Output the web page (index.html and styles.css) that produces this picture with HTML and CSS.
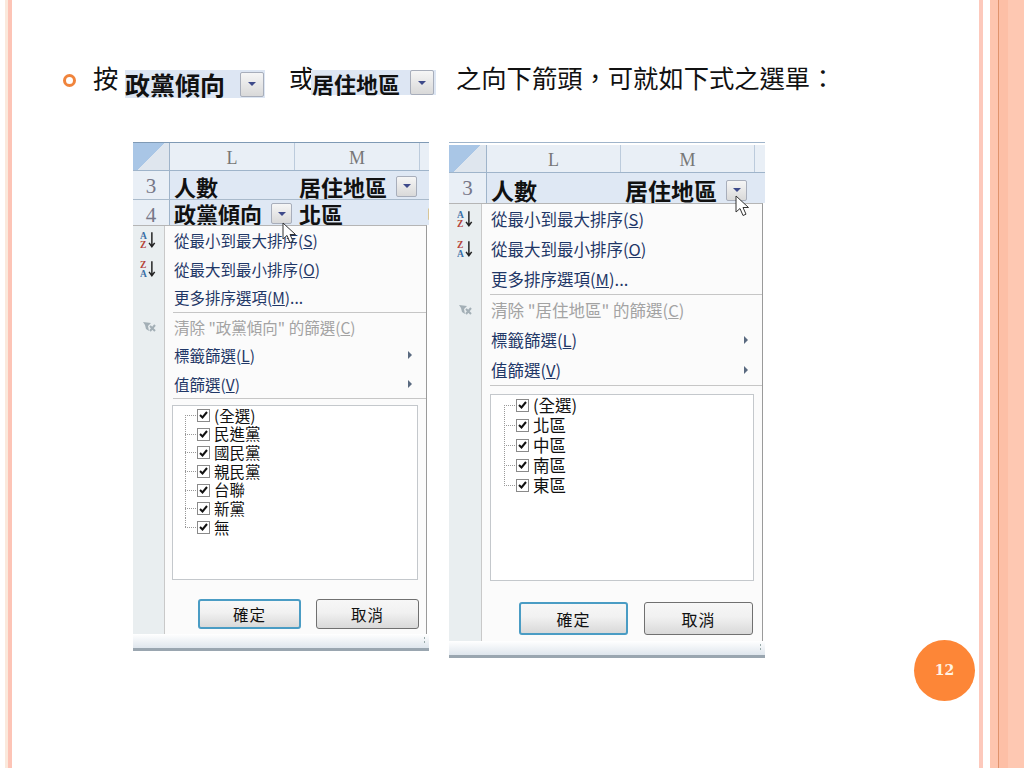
FILE: index.html
```html
<!DOCTYPE html>
<html>
    <head>
        <title>樞紐分析表篩選</title>
        <link rel="stylesheet" href="styles.css">
    </head>
    <body>
        <div class="rail-left"></div>
        <div class="slide">
            <div class="lead">
                <span class="ring"></span>
                <span class="word">按</span>
                <span class="chip chip-a">政黨傾向<span class="drop"></span></span>
                <span class="word word-or">或</span>
                <span class="chip chip-b">居住地區<span class="drop"></span></span>
                <span class="word word-end">之向下箭頭&#xFF0C;可就如下式之選單&#xFF1A;</span>
            </div>

            <div class="shots">
                <div class="shot shot-a">
                    <div class="head">
                        <span class="corner"></span>
                        <span class="col col-l">L</span>
                        <span class="col col-m">M</span>
                        <span class="col col-n"></span>
                    </div>
                    <div class="row row-3">
                        <span class="num">3</span>
                        <span class="cell cell-l">人數</span>
                        <span class="cell cell-m">居住地區<span class="drop"></span></span>
                    </div>
                    <div class="row row-4">
                        <span class="num">4</span>
                        <span class="cell cell-l">政黨傾向<span class="drop"></span></span>
                        <span class="cell cell-m">北區</span>
                        <span class="cell cell-n">中</span>
                    </div>
                    <div class="menu">
                        <div class="item">
                            <span class="icon"><svg width="17" height="18" viewBox="0 0 15 16"><text x="0" y="7" class="az-top">A</text><text x="0" y="15" class="az-bot">Z</text><path d="M10.5 1v12M8 10.5l2.5 3.5 2.5-3.5" fill="none" stroke="#222" stroke-width="1.3"/></svg></span>
                            <span class="label">從最小到最大排序(<u>S</u>)</span>
                        </div>
                        <div class="item">
                            <span class="icon"><svg width="17" height="18" viewBox="0 0 15 16"><text x="0" y="7" class="az-bot">Z</text><text x="0" y="15" class="az-top">A</text><path d="M10.5 1v12M8 10.5l2.5 3.5 2.5-3.5" fill="none" stroke="#222" stroke-width="1.3"/></svg></span>
                            <span class="label">從最大到最小排序(<u>O</u>)</span>
                        </div>
                        <div class="item">
                            <span class="icon"></span>
                            <span class="label">更多排序選項(<u>M</u>)...</span>
                        </div>
                        <div class="rule"></div>
                        <div class="item off">
                            <span class="icon"><svg width="14" height="12" viewBox="0 0 14 12"><path d="M1 1l8 1-3 3 1 5-3-2-1-4z" fill="#a3afb6"/><path d="M8 5l5 5M13 4l-5 6" stroke="#a3afb6" stroke-width="2"/></svg></span>
                            <span class="label">清除 "政黨傾向" 的篩選(<u>C</u>)</span>
                        </div>
                        <div class="item">
                            <span class="icon"></span>
                            <span class="label">標籤篩選(<u>L</u>)</span>
                            <span class="sub"></span>
                        </div>
                        <div class="item">
                            <span class="icon"></span>
                            <span class="label">值篩選(<u>V</u>)</span>
                            <span class="sub"></span>
                        </div>
                        <div class="rule"></div>
                        <ul class="tree">
                            <li><span class="box"><svg width="9" height="8" viewBox="0 0 9 8"><path d="M1 4l2.5 2.5L8 1" fill="none" stroke="#111" stroke-width="2"/></svg></span>(全選)</li>
                            <li><span class="box"><svg width="9" height="8" viewBox="0 0 9 8"><path d="M1 4l2.5 2.5L8 1" fill="none" stroke="#111" stroke-width="2"/></svg></span>民進黨</li>
                            <li><span class="box"><svg width="9" height="8" viewBox="0 0 9 8"><path d="M1 4l2.5 2.5L8 1" fill="none" stroke="#111" stroke-width="2"/></svg></span>國民黨</li>
                            <li><span class="box"><svg width="9" height="8" viewBox="0 0 9 8"><path d="M1 4l2.5 2.5L8 1" fill="none" stroke="#111" stroke-width="2"/></svg></span>親民黨</li>
                            <li><span class="box"><svg width="9" height="8" viewBox="0 0 9 8"><path d="M1 4l2.5 2.5L8 1" fill="none" stroke="#111" stroke-width="2"/></svg></span>台聯</li>
                            <li><span class="box"><svg width="9" height="8" viewBox="0 0 9 8"><path d="M1 4l2.5 2.5L8 1" fill="none" stroke="#111" stroke-width="2"/></svg></span>新黨</li>
                            <li><span class="box"><svg width="9" height="8" viewBox="0 0 9 8"><path d="M1 4l2.5 2.5L8 1" fill="none" stroke="#111" stroke-width="2"/></svg></span>無</li>
                        </ul>
                        <div class="buttons">
                            <button class="btn btn-ok">確定</button>
                            <button class="btn btn-no">取消</button>
                        </div>
                    </div>
                    <div class="status"><span class="grip"></span></div>
                    <svg class="cursor" width="14" height="22" viewBox="0 0 14 22"><path d="M1 1v16l4-3.5 3 7 3-1.3-3-6.7h5.5z" fill="#fff" stroke="#333" stroke-width="1"/></svg>
                </div>

                <div class="shot shot-b">
                    <div class="head">
                        <span class="corner"></span>
                        <span class="col col-l">L</span>
                        <span class="col col-m">M</span>
                        <span class="col col-n"></span>
                    </div>
                    <div class="row row-3">
                        <span class="num">3</span>
                        <span class="cell cell-l">人數</span>
                        <span class="cell cell-m">居住地區<span class="drop"></span></span>
                    </div>
                    <div class="menu">
                        <div class="item">
                            <span class="icon"><svg width="17" height="18" viewBox="0 0 15 16"><text x="0" y="7" class="az-top">A</text><text x="0" y="15" class="az-bot">Z</text><path d="M10.5 1v12M8 10.5l2.5 3.5 2.5-3.5" fill="none" stroke="#222" stroke-width="1.3"/></svg></span>
                            <span class="label">從最小到最大排序(<u>S</u>)</span>
                        </div>
                        <div class="item">
                            <span class="icon"><svg width="17" height="18" viewBox="0 0 15 16"><text x="0" y="7" class="az-bot">Z</text><text x="0" y="15" class="az-top">A</text><path d="M10.5 1v12M8 10.5l2.5 3.5 2.5-3.5" fill="none" stroke="#222" stroke-width="1.3"/></svg></span>
                            <span class="label">從最大到最小排序(<u>O</u>)</span>
                        </div>
                        <div class="item">
                            <span class="icon"></span>
                            <span class="label">更多排序選項(<u>M</u>)...</span>
                        </div>
                        <div class="rule"></div>
                        <div class="item off">
                            <span class="icon"><svg width="14" height="12" viewBox="0 0 14 12"><path d="M1 1l8 1-3 3 1 5-3-2-1-4z" fill="#a3afb6"/><path d="M8 5l5 5M13 4l-5 6" stroke="#a3afb6" stroke-width="2"/></svg></span>
                            <span class="label">清除 "居住地區" 的篩選(<u>C</u>)</span>
                        </div>
                        <div class="item">
                            <span class="icon"></span>
                            <span class="label">標籤篩選(<u>L</u>)</span>
                            <span class="sub"></span>
                        </div>
                        <div class="item">
                            <span class="icon"></span>
                            <span class="label">值篩選(<u>V</u>)</span>
                            <span class="sub"></span>
                        </div>
                        <div class="rule"></div>
                        <ul class="tree">
                            <li><span class="box"><svg width="9" height="8" viewBox="0 0 9 8"><path d="M1 4l2.5 2.5L8 1" fill="none" stroke="#111" stroke-width="2"/></svg></span>(全選)</li>
                            <li><span class="box"><svg width="9" height="8" viewBox="0 0 9 8"><path d="M1 4l2.5 2.5L8 1" fill="none" stroke="#111" stroke-width="2"/></svg></span>北區</li>
                            <li><span class="box"><svg width="9" height="8" viewBox="0 0 9 8"><path d="M1 4l2.5 2.5L8 1" fill="none" stroke="#111" stroke-width="2"/></svg></span>中區</li>
                            <li><span class="box"><svg width="9" height="8" viewBox="0 0 9 8"><path d="M1 4l2.5 2.5L8 1" fill="none" stroke="#111" stroke-width="2"/></svg></span>南區</li>
                            <li><span class="box"><svg width="9" height="8" viewBox="0 0 9 8"><path d="M1 4l2.5 2.5L8 1" fill="none" stroke="#111" stroke-width="2"/></svg></span>東區</li>
                        </ul>
                        <div class="buttons">
                            <button class="btn btn-ok">確定</button>
                            <button class="btn btn-no">取消</button>
                        </div>
                    </div>
                    <div class="status"><span class="grip"></span></div>
                    <svg class="cursor" width="14" height="22" viewBox="0 0 14 22"><path d="M1 1v16l4-3.5 3 7 3-1.3-3-6.7h5.5z" fill="#fff" stroke="#333" stroke-width="1"/></svg>
                </div>
            </div>

            <div class="page-no">12</div>
        </div>
        <div class="rail-right"></div>
    </body>
</html>
```

FILE: styles.css
```css
* {
	box-sizing: border-box;
}

body {
	display: flex;
	width: 1024px;
	height: 768px;
	margin: 0;
	overflow: hidden;
	background-color: #fff;
	color: #111;
	font-family: "Noto Sans CJK TC", "Liberation Sans", sans-serif;
}

/* side stripes */
.rail-left {
	width: 12px;
	background: linear-gradient(to right, #fff 5px, #fbe9dc 5px, #fbe9dc 8px, #fdc4b6 8px);
}

.rail-right {
	width: 45px;
	background: linear-gradient(to right,
		#fdc9bc 4px, #fff 4px, #fff 11px,
		#fec5ae 11px, #fec5ae 19px,
		#e0936c 19px, #e0936c 20px,
		#fdbfa6 20px, #fdbfa6 29px,
		#fec8b2 29px);
}

.slide {
	position: relative;
	flex: 1;
	padding-top: 62px;
}

/* bullet line */
.lead {
	display: flex;
	align-items: flex-start;
	height: 38px;
	padding-left: 51px;
	font-size: 25.3px;
	line-height: 30px;
}

.ring {
	width: 13px;
	height: 13px;
	margin: 12px 17px 0 0;
	border: 3px solid #f0843c;
	border-radius: 50%;
}

.word {
	width: 24px;
}

.word-or {
	margin-left: 24px;
	width: 22px;
}

.word-end {
	width: auto;
	margin-left: 20px;
	white-space: nowrap;
}

.chip {
	display: flex;
	align-items: center;
	justify-content: space-between;
	margin-top: 8px;
	background-color: #dde6f3;
	font-weight: 700;
}

.chip-a {
	width: 140px;
	height: 28px;
	margin-left: 8px;
	padding-right: 1px;
	font-size: 25px;
}

.chip-b {
	width: 125px;
	height: 25px;
	padding: 0 2px 0 1px;
	font-size: 22px;
}

.chip .drop {
	width: 24px;
	height: 25px;
}

/* filter arrow button */
.drop {
	display: flex;
	flex: none;
	align-items: center;
	justify-content: center;
	width: 21px;
	height: 21px;
	border: 1px solid #a8aebb;
	border-radius: 2px;
	background: linear-gradient(#f6f6f6, #d9d9d9);
}

.drop::after {
	content: "";
	border-top: 4px solid #3e4a8a;
	border-left: 4px solid transparent;
	border-right: 4px solid transparent;
}

/* excel screenshots */
.shots {
	display: flex;
	align-items: flex-start;
	gap: 20px;
	margin-top: 42px;
	padding-left: 121px;
}

.shot {
	position: relative;
	overflow: hidden;
	border-top: 1px solid #7f9ab5;
	background-color: #fff;
}

.shot-a {
	--gutter: 31px;
	--item: 28.5px;
	--tree-row: 18.7px;
	--menu-font: 15.5px;
	width: 296px;
}

.shot-b {
	--gutter: 32px;
	--item: 30px;
	--tree-row: 20px;
	--menu-font: 16.5px;
	width: 316px;
	padding-top: 2px;
	border-top-color: #9fb4ca;
}

.head {
	display: flex;
	height: 28px;
	border-bottom: 1px solid #9fb4ca;
	background-color: #e9eff6;
}

.corner {
	flex: none;
	width: 37px;
	background: linear-gradient(135deg, #a9c6e6 50%, #dfe6ee 50%);
	border-right: 1px solid #9fb4ca;
}

.shot-b .corner {
	width: 38px;
}

.col {
	flex: none;
	width: 125px;
	padding-top: 3px;
	border-right: 1px solid #bccbdc;
	color: #777;
	font-family: "Liberation Serif", serif;
	font-size: 18px;
	line-height: 24px;
	text-align: center;
}

.shot-b .col {
	width: 134px;
}

.col-n {
	flex: 1;
	border-right: 0;
}

.row {
	display: flex;
	height: 28px;
	overflow: hidden;
	background-color: #dfe8f4;
	font-size: 22px;
	font-weight: 700;
	line-height: 27px;
}

.row-4 {
	height: 26px;
	border-top: 1px solid #a9bacb;
}

.shot-b .row-3 {
	height: 30px;
	font-size: 23px;
}

.num {
	flex: none;
	width: 37px;
	padding-top: 2px;
	border-right: 1px solid #9fb4ca;
	background-color: #e9eff6;
	color: #778;
	font-family: "Liberation Serif", serif;
	font-size: 21px;
	font-weight: 400;
	text-align: center;
}

.shot-b .num {
	width: 38px;
}

.cell {
	display: flex;
	flex: none;
	align-items: center;
	width: 125px;
	padding: 2px 0 0 4px;
	white-space: nowrap;
}

.shot-b .cell {
	width: 134px;
	padding: 4px 0 0 4px;
}

.cell-n {
	width: 20px;
	padding-left: 7px;
}

.cell .drop {
	margin-left: 9px;
}

/* dropdown menu */
.menu {
	display: flex;
	flex-direction: column;
	margin-right: 2px;
	border-top: 1px solid #b5b5b5;
	border-right: 1px solid #9a9a9a;
	background: linear-gradient(to right, #e9eef0 var(--gutter), #c9c9c9 var(--gutter), #c9c9c9 calc(var(--gutter) + 1px), #fbfbfb calc(var(--gutter) + 1px));
	color: #1f3767;
	font-size: var(--menu-font);
}

.item {
	display: flex;
	align-items: center;
	height: var(--item);
}

.icon {
	display: flex;
	align-items: center;
	justify-content: center;
	width: var(--gutter);
}

.az-top {
	fill: #3a6ea5;
	font: 700 8.5px "Liberation Serif", serif;
}

.az-bot {
	fill: #b5443a;
	font: 700 8.5px "Liberation Serif", serif;
}

.label {
	flex: 1;
	padding-left: 10px;
	white-space: nowrap;
}

.off {
	color: #a3a3a3;
}

.sub {
	margin-right: 14px;
	border-left: 4px solid #5a6a80;
	border-top: 4px solid transparent;
	border-bottom: 4px solid transparent;
}

.rule {
	height: 1px;
	margin-left: calc(var(--gutter) + 9px);
	background-color: #c6c6c6;
}

.tree {
	flex: none;
	margin: 6px 8px 0 39px;
	padding: 0 0 0 12px;
	height: 175px;
	border: 1px solid #c4c8cc;
	background-color: #fff;
	color: #111;
	font-size: var(--menu-font);
	list-style: none;
}

.shot-b .tree {
	height: 187px;
	margin: 8px 8px 0 41px;
	padding-left: 13px;
}

.tree li {
	display: flex;
	align-items: center;
	height: var(--tree-row);
	line-height: 1;
}

.tree li::before {
	content: "";
	flex: none;
	align-self: stretch;
	width: 12px;
	background:
		repeating-linear-gradient(to bottom, #999 0 1px, transparent 1px 2px) left top / 1px 100% no-repeat,
		repeating-linear-gradient(to right, #999 0 1px, transparent 1px 2px) left center / 100% 1px no-repeat;
}

.tree li:last-child::before {
	background:
		repeating-linear-gradient(to bottom, #999 0 1px, transparent 1px 2px) left top / 1px 50% no-repeat,
		repeating-linear-gradient(to right, #999 0 1px, transparent 1px 2px) left center / 100% 1px no-repeat;
}

.tree li:first-child::before {
	background:
		repeating-linear-gradient(to bottom, #999 0 1px, transparent 1px 2px) left bottom / 1px 50% no-repeat,
		repeating-linear-gradient(to right, #999 0 1px, transparent 1px 2px) left center / 100% 1px no-repeat;
}

.box {
	display: flex;
	flex: none;
	align-items: center;
	justify-content: center;
	width: 13px;
	height: 13px;
	margin-right: 4px;
	border: 1px solid #8a8a8a;
	background-color: #fff;
}

.buttons {
	display: flex;
	justify-content: flex-end;
	gap: 15px;
	height: 35px;
	margin-top: 19px;
	padding-right: 7px;
}

.shot-b .buttons {
	gap: 16px;
	height: 39px;
	margin-top: 21px;
	padding-right: 9px;
}

.btn {
	width: 103px;
	height: 30px;
	padding: 0;
	border: 1px solid #707070;
	border-radius: 3px;
	background: linear-gradient(#f7f7f7, #f1f1f1 45%, #d9d9d9);
	color: #111;
	font-family: inherit;
	font-size: 15.5px;
	letter-spacing: 1px;
}

.btn-ok {
	border: 2px solid #4a9cc4;
}

.shot-b .btn {
	width: 109px;
	height: 33px;
	font-size: 16px;
}

.status {
	display: flex;
	align-items: flex-end;
	justify-content: flex-end;
	height: 17px;
	padding: 0 2px 4px 0;
	border-bottom: 3px solid #9aa6b0;
	background: linear-gradient(#fff, #dfe6ed);
}

.grip {
	width: 5px;
	height: 8px;
	background: radial-gradient(circle, #9aa 1px, transparent 1px) 0 0 / 5px 4px;
}

.shot-a .cursor {
	position: absolute;
	left: 149px;
	top: 79px;
}

.shot-b .cursor {
	position: absolute;
	left: 286px;
	top: 52px;
}

.page-no {
	position: absolute;
	left: 902px;
	top: 640px;
	width: 61px;
	height: 61px;
	border-radius: 50%;
	background-color: #fd8637;
	color: #fff3e4;
	font-family: "DejaVu Serif", serif;
	font-size: 14px;
	font-weight: 700;
	line-height: 61px;
	text-align: center;
}
```
